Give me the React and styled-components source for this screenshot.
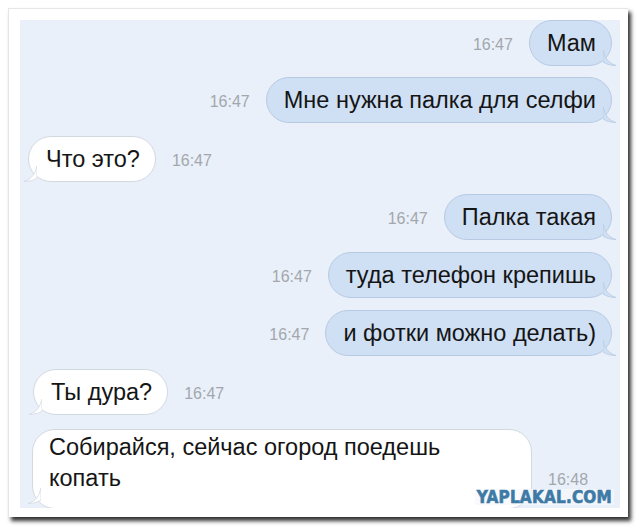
import React from 'react';
import styled, { createGlobalStyle } from 'styled-components';

const GlobalStyle = createGlobalStyle`
  body {
    margin: 0;
    background: #ffffff;
    font-family: 'Liberation Sans', Arial, sans-serif;
  }
`;

const messages = [
  { out: true, text: 'Мам', time: '16:47', top: 0 },
  { out: true, text: 'Мне нужна палка для селфи', time: '16:47', top: 11 },
  { out: false, text: 'Что это?', time: '16:47', top: 13, left: 8 },
  { out: true, text: 'Палка такая', time: '16:47', top: 12 },
  { out: true, text: 'туда телефон крепишь', time: '16:47', top: 12 },
  { out: true, text: 'и фотки можно делать)', time: '16:47', top: 12 },
  { out: false, text: 'Ты дура?', time: '16:47', top: 13, left: 13 },
];

const Tail = ({ out }) =>
  out ? (
    <TailSvg out viewBox="0 0 14 16" width="14" height="16">
      <path
        d="M0 0 C2 8 5 13 13 15.5 C7 15.5 3 14 0 12 Z"
        fill="#cfdff4"
        stroke="#b7cae3"
        strokeWidth="0.8"
      />
    </TailSvg>
  ) : (
    <TailSvg viewBox="0 0 14 16" width="14" height="16">
      <path
        d="M14 0 C12 8 9 13 1 15.5 C7 15.5 11 14 14 12 Z"
        fill="#ffffff"
        stroke="#d3d9e1"
        strokeWidth="0.8"
      />
    </TailSvg>
  );

const App = () => {
  return (
    <>
      <GlobalStyle />
      <Page>
        <Card>
          <Chat>
            {messages.map((m, i) => (
              <Row key={i} out={m.out} top={m.top} left={m.left}>
                {m.out && <Time>{m.time}</Time>}
                <Bubble out={m.out}>
                  {m.text}
                  <Tail out={m.out} />
                </Bubble>
                {!m.out && <Time>{m.time}</Time>}
              </Row>
            ))}
            <LastRow>
              <WideBubble>
                Собирайся, сейчас огород поедешь
                <br />
                копать
                <Tail />
              </WideBubble>
              <LastTime>16:48</LastTime>
            </LastRow>
            <Watermark>YAPLAKAL.COM</Watermark>
          </Chat>
        </Card>
      </Page>
    </>
  );
};

const Page = styled.div`
  padding: 8px 0 0 8px;
  width: 640px;
  height: 529px;
  box-sizing: border-box;
`;

const Card = styled.div`
  width: 620px;
  height: 509px;
  box-sizing: border-box;
  padding: 11px 8px 9px 11px;
  background: #ffffff;
  border-top: 1px solid #e6e6e6;
  border-left: 1px solid #e6e6e6;
  box-shadow: 3px 4px 4px rgba(0, 0, 0, 0.8);
`;

const Chat = styled.div`
  position: relative;
  width: 600px;
  height: 488px;
  background: #e9f0f9;
  display: flex;
  flex-direction: column;
  overflow: hidden;
  padding: 0 8px 0 0;
  box-sizing: border-box;
`;

const Row = styled.div`
  display: flex;
  align-items: center;
  justify-content: ${(p) => (p.out ? 'flex-end' : 'flex-start')};
  gap: 16px;
  margin-top: ${(p) => p.top}px;
  margin-left: ${(p) => p.left || 0}px;
`;

const Bubble = styled.div`
  position: relative;
  height: 46px;
  box-sizing: border-box;
  display: flex;
  align-items: center;
  padding: 0 15px 0 17px;
  border-radius: 23px;
  font-size: 23.5px;
  color: #151515;
  white-space: nowrap;
  background: ${(p) => (p.out ? '#cfdff4' : '#ffffff')};
  border: 1px solid ${(p) => (p.out ? '#b7cae3' : '#d3d9e1')};
`;

const TailSvg = styled.svg`
  position: absolute;
  bottom: -1px;
  ${(p) => (p.out ? 'right: -6px;' : 'left: -6px;')}
`;

const Time = styled.span`
  font-size: 16px;
  color: #a3a7ad;
  padding-top: 3px;
`;

const LastTime = styled(Time)`
  margin-bottom: 20px;
`;

const LastRow = styled.div`
  display: flex;
  align-items: flex-end;
  gap: 16px;
  margin-top: 14px;
  margin-left: 12px;
`;

const WideBubble = styled.div`
  position: relative;
  width: 500px;
  height: 80px;
  box-sizing: border-box;
  padding: 2px 16px 0 16px;
  border-radius: 23px;
  background: #ffffff;
  border: 1px solid #d3d9e1;
  font-size: 23.5px;
  line-height: 31px;
  color: #151515;
  ${TailSvg} {
    bottom: 4px;
  }
`;

const Watermark = styled.div`
  position: absolute;
  right: 6px;
  bottom: 3px;
  padding: 0 2px;
  font-family: 'DejaVu Sans Condensed', 'DejaVu Sans', sans-serif;
  font-weight: 700;
  font-size: 17px;
  line-height: 16px;
  letter-spacing: 0.2px;
  -webkit-text-stroke: 0.6px #3e7aa6;
  color: #3e7aa6;
  background: rgba(245, 248, 252, 0.7);
`;

export default App;
